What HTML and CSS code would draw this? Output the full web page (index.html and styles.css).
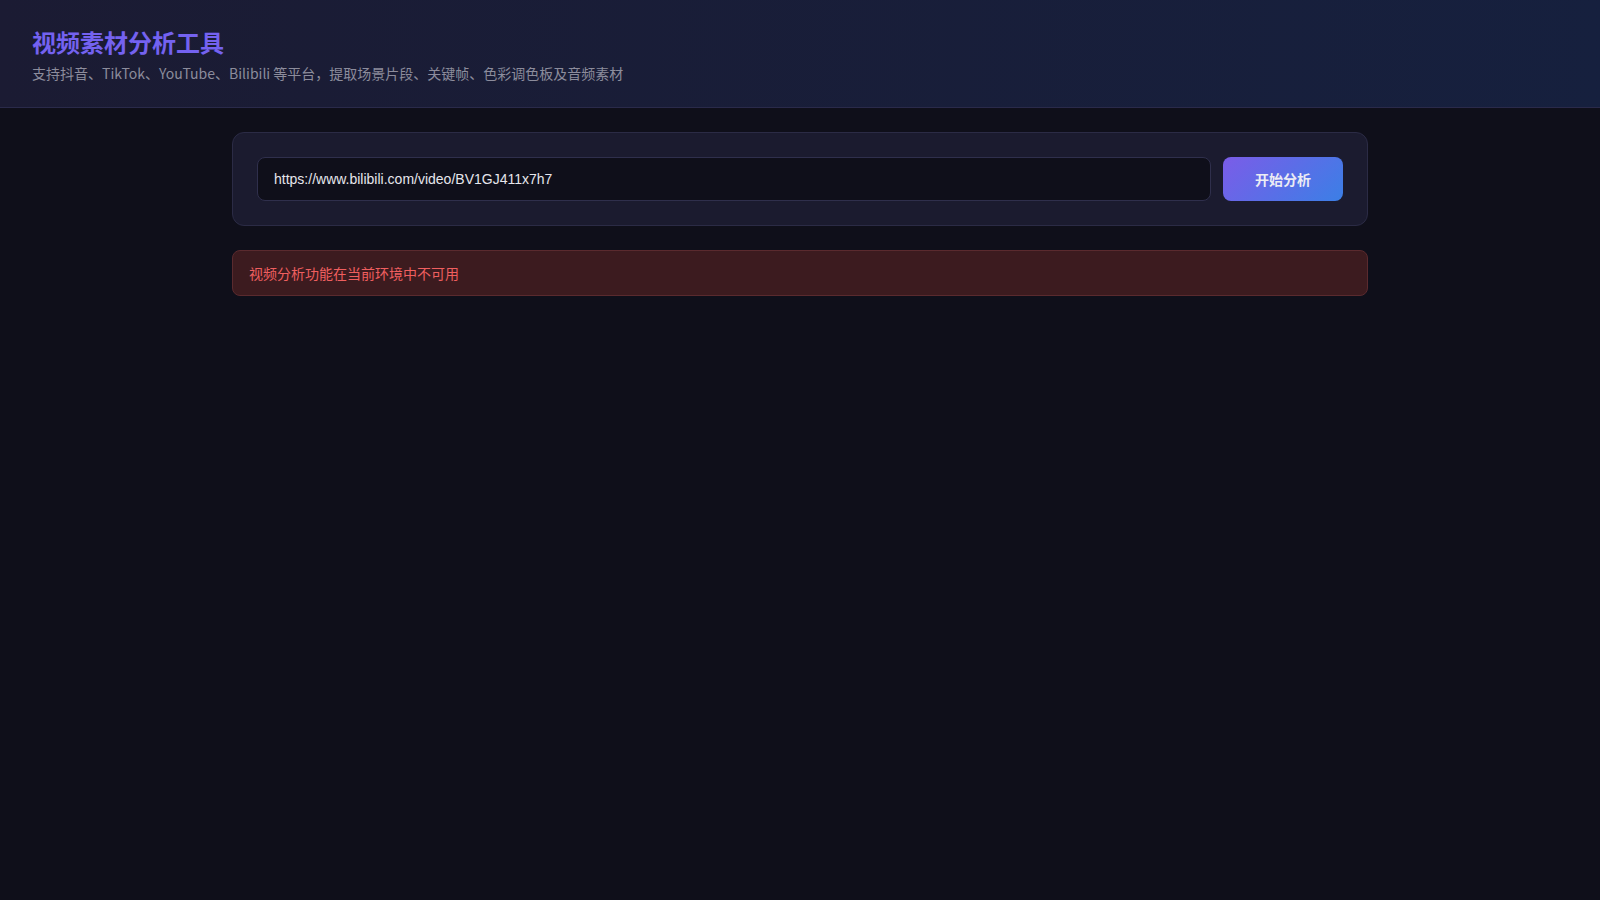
FILE: index.html
```html
<!DOCTYPE html>
<html lang="zh-CN">
<head>
<meta charset="utf-8">
<title>视频素材分析工具</title>
<link rel="stylesheet" href="styles.css">
</head>
<body>
  <header class="app-header">
    <h1 class="app-title">视频素材分析工具</h1>
    <p class="app-subtitle">支持抖音、TikTok、YouTube、Bilibili 等平台，提取场景片段、关键帧、色彩调色板及音频素材</p>
  </header>
  <main class="container">
    <section class="search-card">
      <input class="url-input" type="text" value="https://www.bilibili.com/video/BV1GJ411x7h7">
      <button class="analyze-btn" type="button">开始分析</button>
    </section>
    <div class="error-box">视频分析功能在当前环境中不可用</div>
  </main>
</body>
</html>
```

FILE: styles.css
```css
* {
  box-sizing: border-box;
}

html, body {
  margin: 0;
  padding: 0;
  min-height: 100%;
}

body {
  background: #0f0f1a;
  color: #e0e0e0;
  font-family: "Noto Sans CJK SC", "Noto Sans", sans-serif;
  min-height: 100vh;
}

.app-header {
  background: linear-gradient(90deg, #1b1b33 0%, #16203e 100%);
  border-bottom: 1px solid #2a2a4a;
  padding: 25px 32px 23px;
}

.app-title {
  margin: 0 0 4px;
  font-size: 24px;
  line-height: 34px;
  font-weight: 700;
  color: #7462f0;
}

.app-subtitle {
  margin: 0;
  font-size: 14px;
  line-height: 21px;
  color: #8c8c9c;
}

.container {
  max-width: 1200px;
  margin: 0 auto;
  padding: 24px 32px;
}

.search-card {
  display: flex;
  gap: 12px;
  padding: 24px;
  background: #1b1b2f;
  border: 1px solid #2b2b45;
  border-radius: 12px;
}

.url-input {
  flex: 1;
  height: 44px;
  padding: 0 16px;
  background: #0f0f1a;
  border: 1px solid #2f2f4c;
  border-radius: 8px;
  color: #e6e6ec;
  font-family: "Liberation Sans", Arial, sans-serif;
  font-size: 14px;
  outline: none;
}

.analyze-btn {
  width: 120px;
  height: 44px;
  border: none;
  border-radius: 8px;
  background: linear-gradient(135deg, #7b5ce8 0%, #3b7fe6 100%);
  color: #ececf4;
  font-family: "Noto Sans CJK SC", sans-serif;
  font-size: 14px;
  font-weight: 700;
  cursor: pointer;
}

.error-box {
  margin-top: 24px;
  padding: 12px 16px;
  line-height: 20px;
  font-size: 14px;
  color: #ef5f5f;
  background: #3c1b1f;
  border: 1px solid #5a2a2e;
  border-radius: 8px;
}
```
